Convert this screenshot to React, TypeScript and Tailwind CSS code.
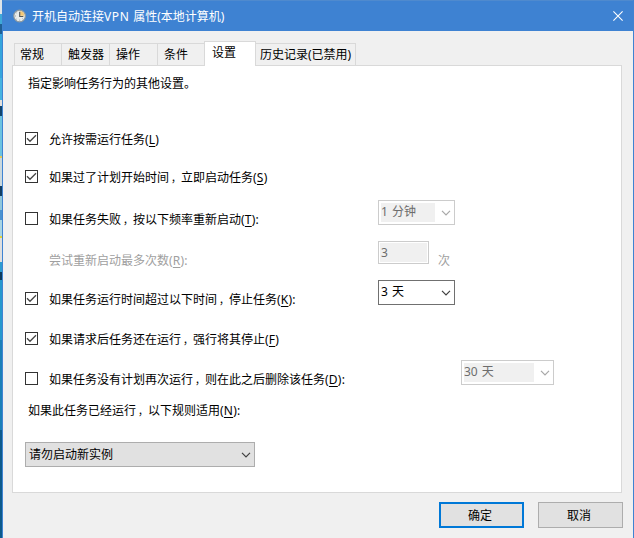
import type { ReactNode } from 'react';
import clsx from 'clsx';

const tabs = [
  { label: '常规', className: 'w-[47px] pl-[5px]' },
  { label: '触发器', className: 'w-[48px] pl-[6px]' },
  { label: '操作', className: 'w-[48px] pl-[6px]' },
  { label: '条件', className: 'w-[47px] pl-[6px]' },
  { label: '设置', className: 'w-[52px] pl-[7px]', active: true },
  { label: '历史记录(已禁用)', className: 'w-[100px] pl-[4px]' },
];

// slice of the desktop visible to the left of the dialog
const desktop = [
  'h-[14px] bg-[#dfe5e8]',
  'h-[10px] bg-[#3fa9d8]',
  'h-[10px] bg-[#1f5f94]',
  'h-[44px] bg-[#35a5dc]',
  'h-[22px] bg-[#45b3e0]',
  'h-[6px] bg-[#e3e0dc]',
  'h-[10px] bg-[#12456d]',
  'h-[40px] bg-[#6cc3e0]',
  'h-[2px] bg-[#e2c95a]',
  'h-[28px] bg-[#c9d8dd]',
  'h-[10px] bg-[#123f63]',
  'h-[14px] bg-[#8fc7dc]',
  'h-[10px] bg-[#4a92cf]',
  'h-[16px] bg-[#a9d5e3]',
  'h-[2px] bg-[#e2d33c]',
  'h-[24px] bg-[#dedfdf]',
  'h-[10px] bg-[#2c9cd0]',
  'h-[8px] bg-[#0c3a5c]',
  'h-[60px] bg-[#2698cd]',
  'h-[90px] bg-[#1a7fb8]',
  'h-[108px] bg-[#0d5a8c]',
];

function ClockIcon() {
  return (
    <svg className="h-[14px] w-[14px]" viewBox="0 0 14 14" fill="none">
      <circle cx="6.6" cy="7" r="5.8" fill="#e9ecea" stroke="#8f9a9f" strokeWidth="1.2" />
      <path d="M7 6.8V2.2A4.6 4.6 0 0 1 11.4 6.8Z" fill="#f3c877" />
      <path d="M6.7 2.8V7.5H10.3" stroke="#4f565a" strokeWidth="1.1" />
      <path d="M2 7h1M6.7 11.6v-1M3.4 3.8l.6.6M3.4 10.2l.6-.6M10 10.2l-.6-.6" stroke="#8b9296" strokeWidth=".8" />
    </svg>
  );
}

function Chevron({ className }: { className: string }) {
  return (
    <svg className={clsx('h-[6px] w-[10px] shrink-0', className)} viewBox="0 0 10 6" fill="none" stroke="currentColor" strokeWidth="1.2">
      <path d="M1 .8 5 4.8 9 .8" />
    </svg>
  );
}

function CheckBox({ checked }: { checked?: boolean }) {
  return (
    <span className="flex h-[13px] w-[13px] shrink-0 items-center justify-center border border-[#333333] bg-white">
      {checked && (
        <svg className="h-[11px] w-[11px]" viewBox="0 0 11 11" fill="none" stroke="#444" strokeWidth="1.3">
          <path d="M1 5.3 4 8.3 10 2.3" />
        </svg>
      )}
    </span>
  );
}

// small comma set towards the middle of a full-width cell
function Comma() {
  return <span className="inline-block w-3 pl-[2px] text-[10px]">，</span>;
}

function Key({ children, colon }: { children: string; colon?: boolean }) {
  return (
    <span className="tracking-[0.2px]">
      (<span className="underline underline-offset-2">{children}</span>){colon && ':'}
    </span>
  );
}

function Option({ checked, className, children, control }: { checked?: boolean; className: string; children: ReactNode; control?: ReactNode }) {
  return (
    <div className={clsx('flex items-start', className)}>
      <label className="flex h-[37px] flex-1 items-center pl-3">
        <CheckBox checked={checked} />
        <span className="pl-[11px] pt-[2px]">{children}</span>
      </label>
      {control}
    </div>
  );
}

function Combo({ value, disabled, className }: { value: string; disabled?: boolean; className: string }) {
  return (
    <div
      className={clsx(
        'flex h-[25px] shrink-0 items-center justify-between border bg-white pl-[2px] pr-[3px]',
        disabled ? 'border-[#cccccc] text-[#6d6d6d]' : 'border-[#707070] text-black',
        className,
      )}
    >
      <span className={clsx('mr-[6px] h-[19px] flex-1 leading-[17px] [word-spacing:1px]', disabled && 'bg-[#f0f0f0]')}>{value}</span>
      <Chevron className={disabled ? 'text-[#a8a8a8]' : 'text-[#404040]'} />
    </div>
  );
}

export default function App() {
  return (
    <div className="flex h-[538px] w-[634px] overflow-hidden whitespace-nowrap font-['Noto_Sans','Noto_Sans_CJK_SC',sans-serif] text-[12px] leading-[15px] text-black">
      <div className="flex w-[2px] shrink-0 flex-col">
        {desktop.map((c, i) => (
          <div key={i} className={clsx('shrink-0', c)} />
        ))}
      </div>

      <div className="flex flex-1 flex-col border-x border-[#3f83d2] bg-[#f0f0f0]">
        <header className="flex h-[31px] shrink-0 items-center border-t border-[#4f8ace] bg-[#3e82d2] pl-[10px] pr-[10px] text-white">
          <ClockIcon />
          <h1 className="flex-1 pl-[5px]">
            开机自动连接<span className="tracking-[0.6px]">VPN </span>属性(本地计算机)
          </h1>
          <svg className="h-[10px] w-[10px]" viewBox="0 0 10 10" stroke="#fff" strokeWidth="1.1">
            <path d="M.4.4 9.6 9.6M9.6.4.4 9.6" />
          </svg>
        </header>

        <nav className="z-10 -mb-px flex h-[35px] shrink-0 items-end pl-[11px]">
          {tabs.map((tab) => (
            <button
              key={tab.label}
              className={clsx(
                'shrink-0 border-[#d9d9d9] text-left',
                tab.active ? 'h-[25px] border-x border-t bg-white pb-[3px]' : 'h-[23px] border-b border-t pb-px',
                !tab.active && (tab.label.startsWith('历史') ? 'border-r' : 'border-l'),
                tab.className,
              )}
            >
              {tab.label}
            </button>
          ))}
        </nav>

        <main className="ml-[9px] h-[428px] w-[610px] shrink-0 border border-[#d9d9d9] bg-white">
          <p className="h-[54px] pl-[15px] pt-[10px]">指定影响任务行为的其他设置。</p>

          <Option checked className="h-[38px]">
            允许按需运行任务
            <Key>L</Key>
          </Option>
          <Option checked className="h-[42px]">
            如果过了计划开始时间
            <Comma />
            立即启动任务
            <Key>S</Key>
          </Option>
          <Option className="h-[41px] pr-[166px]" control={<Combo value="1 分钟" disabled className="w-[77px]" />}>
            如果任务失败
            <Comma />
            按以下频率重新启动
            <Key colon>T</Key>
          </Option>

          <div className="flex h-[39px] items-start pl-9 text-[#a0a0a0]">
            <span className="w-[329px] pt-[12px]">
              尝试重新启动最多次数
              <Key colon>R</Key>
            </span>
            <span className="flex h-[23px] w-[51px] border border-[#cccccc] p-px text-[#6d6d6d]">
              <span className="flex-1 bg-[#f0f0f0] pl-px pt-[2px]">3</span>
            </span>
            <span className="pl-[9px] pt-[12px]">次</span>
          </div>

          <Option checked className="h-[40px] pr-[166px]" control={<Combo value="3 天" className="w-[77px]" />}>
            如果任务运行时间超过以下时间
            <Comma />
            停止任务
            <Key colon>K</Key>
          </Option>
          <Option checked className="h-[40px]">
            如果请求后任务还在运行
            <Comma />
            强行将其停止
            <Key>F</Key>
          </Option>
          <Option className="h-[43px] pr-[67px]" control={<Combo value="30 天" disabled className="w-[93px]" />}>
            如果任务没有计划再次运行
            <Comma />
            则在此之后删除该任务
            <Key colon>D</Key>
          </Option>

          <p className="h-[39px] pl-[15px]">
            如果此任务已经运行
            <Comma />
            以下规则适用
            <Key colon>N</Key>
          </p>
          <div className="ml-3 flex h-[25px] w-[230px] items-center justify-between border border-[#adadad] bg-[#e1e1e1] pl-[3px] pr-[3px]">
            请勿启动新实例
            <Chevron className="text-[#404040]" />
          </div>
        </main>

        <footer className="flex justify-end gap-[14px] pr-[10px] pt-[9px]">
          <button className="h-[26px] w-[85px] border-2 border-[#0078d7] bg-[#e1e1e1] pr-[3px]">确定</button>
          <button className="h-[26px] w-[85px] border border-[#adadad] bg-[#e1e1e1] pr-[3px]">取消</button>
        </footer>
      </div>
    </div>
  );
}
